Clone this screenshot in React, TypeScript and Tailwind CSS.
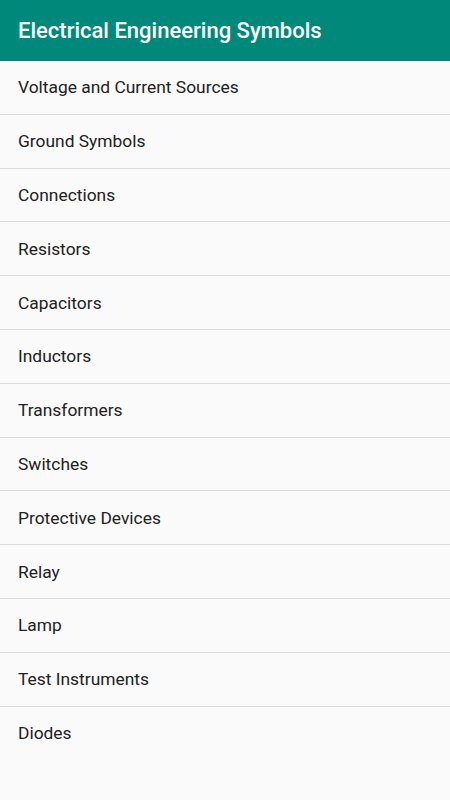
const items = [
  "Voltage and Current Sources",
  "Ground Symbols",
  "Connections",
  "Resistors",
  "Capacitors",
  "Inductors",
  "Transformers",
  "Switches",
  "Protective Devices",
  "Relay",
  "Lamp",
  "Test Instruments",
  "Diodes",
];

export default function App() {
  return (
    <div className="w-[450px] h-[800px] bg-[#fafafa] font-['Roboto',sans-serif] overflow-hidden">
      <header className="h-[61px] bg-[#00897b] flex items-center px-[18px]">
        <h1 className="text-white text-[22px] font-medium">Electrical Engineering Symbols</h1>
      </header>
      <ul>
        {items.map((item, i) => (
          <li
            key={item}
            className={
              "h-[53.8px] flex items-center px-[18px] text-[17.4px] text-[#212121] " +
              (i < items.length - 1 ? "border-b border-[#dadada]" : "")
            }
          >
            {item}
          </li>
        ))}
      </ul>
    </div>
  );
}
